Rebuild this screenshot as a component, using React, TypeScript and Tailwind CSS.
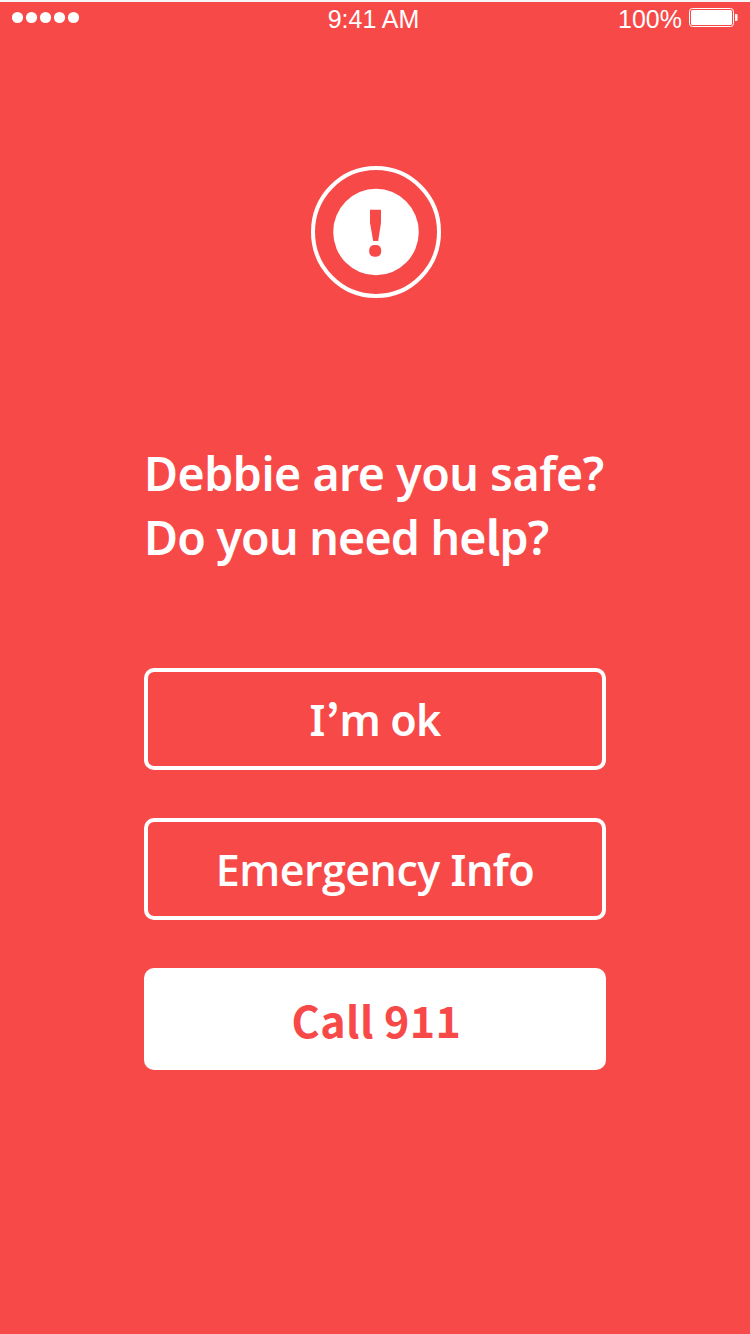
function StatusBar() {
  return (
    <header className="grid h-10 grid-cols-3 items-start border-t-2 border-[#f5f5f5] font-['Liberation_Sans',Arial,sans-serif] text-[25px] leading-[35px] font-normal">
      <svg className="mt-[9px] ml-3" width="68" height="13" viewBox="0 0 68 13" fill="#fff">
        {[5.5, 19.5, 33.5, 47.5, 61.5].map((cx) => (
          <circle key={cx} cx={cx} cy="6.5" r="5.6" />
        ))}
      </svg>
      <span className="pr-[3px] text-center whitespace-nowrap">9:41 AM</span>
      <div className="flex justify-end pr-[11px]">
        <span>100%</span>
        <svg className="mt-[5px] ml-[7px]" width="50" height="21" viewBox="0 0 50 21" fill="none">
          <rect x="0.5" y="1.5" width="44" height="18" rx="3" stroke="#fff" />
          <rect x="2" y="3" width="41" height="15" rx="1.5" fill="#fff" />
          <path d="M46 7h1.5q1 0 1 1v5q0 1-1 1H46z" fill="#fff" />
        </svg>
      </div>
    </header>
  );
}

function AlertIcon() {
  return (
    <svg className="mt-[126px] ml-px" width="130" height="132" viewBox="0 0 130 132">
      <ellipse cx="65" cy="66" rx="63" ry="64" fill="none" stroke="#fff" strokeWidth="4" />
      <ellipse cx="65" cy="66" rx="42.8" ry="43.3" fill="#fff" />
      <path d="M59 43.8h11v13L67.2 75h-5L59 56.8z" fill="#f84949" />
      <rect x="58.2" y="79" width="12" height="11.8" rx="5" fill="#f84949" />
    </svg>
  );
}

export default function App() {
  return (
    <main className="flex h-[1334px] w-[750px] flex-col overflow-hidden bg-[#f84949] font-['Noto_Sans',sans-serif] font-[640] text-white">
      <StatusBar />
      <div className="flex flex-col items-center">
        <AlertIcon />
        <section className="mt-[143px] w-[462px]">
          <h1 className="text-[46.5px] leading-[64px] font-[640] whitespace-nowrap">
            <span className="block h-16 tracking-[-0.5px]">Debbie are you safe?</span>
            <span className="block h-16 tracking-[-0.8px]">
              Do you need he
              <span className="font-['Noto_Sans_CJK_JP',sans-serif] leading-none font-bold">l</span>
              p?
            </span>
          </h1>
          <div className="mt-[99px] flex flex-col gap-12 text-[43px]">
            <button className="flex h-[102px] items-center justify-center rounded-[10px] border-4 border-white pt-[3px]">
              <span>
                I
                <span className="font-['Noto_Sans_CJK_KR',sans-serif] leading-none font-bold">’</span>
                <span className="tracking-[-0.8px]">m ok</span>
              </span>
            </button>
            <button className="flex h-[102px] items-center justify-center rounded-[10px] border-4 border-white pt-[3px]">
              <span className="tracking-[-0.5px] whitespace-nowrap">
                <span className="font-['Open_Sans',sans-serif]">Emergency</span> Info
              </span>
            </button>
            <button className="flex h-[102px] items-center justify-center rounded-[10px] bg-white pl-[3px] font-['Noto_Sans_CJK_JP',sans-serif] font-bold text-[#f84949]">
              <span className="tracking-[0.4px]">Call 911</span>
            </button>
          </div>
        </section>
      </div>
    </main>
  );
}
